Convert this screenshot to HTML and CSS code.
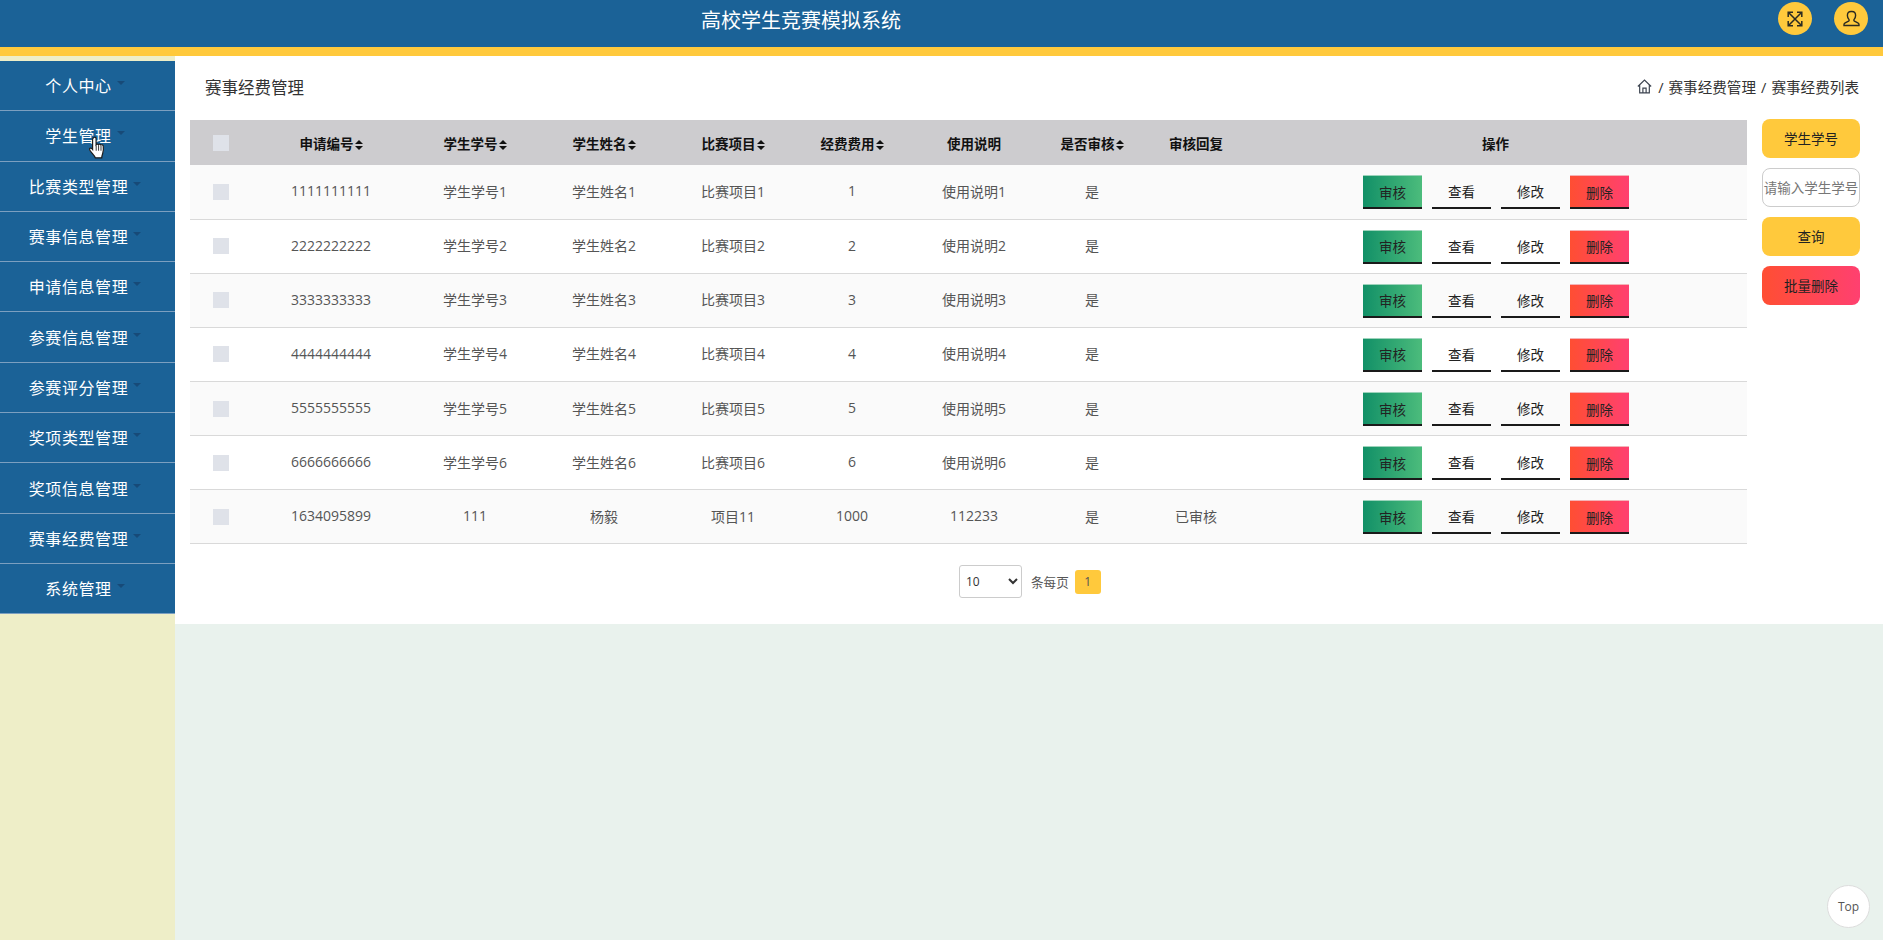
FILE: index.html
```html
<!DOCTYPE html>
<html lang="zh-CN">
<head>
<meta charset="utf-8">
<title>高校学生竞赛模拟系统</title>
<link rel="stylesheet" href="styles.css">
</head>
<body>
<header class="topbar">
  <div class="topbar-title">高校学生竞赛模拟系统</div>
  <div class="topbar-tools">
    <span class="round-btn"><svg viewBox="0 0 20 20" width="20" height="20" fill="none" stroke="#2b2a22" stroke-width="1.5"><path d="M4 4l12 12M16 4L4 16"/><path d="M3.2 8V3.2H8M12 3.2h4.8V8M3.2 12v4.8H8M12 16.8h4.8V12"/></svg></span>
    <span class="round-btn"><svg viewBox="0 0 20 20" width="20" height="20" fill="none" stroke="#2b2a22" stroke-width="1.4"><path d="M10 2.5c-2.3 0-3.6 1.7-3.6 4 0 1.800.8 3.100 1.500 3.900.4.500.3 1.400-.3 1.700l-3.400 1.700c-.8.400-1.200 1-1.200 1.700v1h15v-1c0-.7-.4-1.300-1.200-1.700l-3.400-1.700c-.6-.3-.7-1.200-.3-1.700.7-.8 1.500-2.100 1.500-3.900 0-2.300-1.300-4-3.600-4z"/></svg></span>
  </div>
</header>
<div class="layout">
  <aside class="sidebar">
    <nav class="menu">
      <a class="menu-item">个人中心<i class="caret"></i></a>
      <a class="menu-item">学生管理<i class="caret"></i></a>
      <a class="menu-item">比赛类型管理<i class="caret"></i></a>
      <a class="menu-item">赛事信息管理<i class="caret"></i></a>
      <a class="menu-item">申请信息管理<i class="caret"></i></a>
      <a class="menu-item">参赛信息管理<i class="caret"></i></a>
      <a class="menu-item">参赛评分管理<i class="caret"></i></a>
      <a class="menu-item">奖项类型管理<i class="caret"></i></a>
      <a class="menu-item">奖项信息管理<i class="caret"></i></a>
      <a class="menu-item">赛事经费管理<i class="caret"></i></a>
      <a class="menu-item">系统管理<i class="caret"></i></a>
    </nav>
  </aside>
  <main class="main">
    <section class="panel">
      <div class="crumbs">
        <h1 class="page-title">赛事经费管理</h1>
        <div class="crumb-path">
          <svg class="home" viewBox="0 0 14 14" width="15" height="15" fill="none" stroke="#3d4450" stroke-width="1.1"><path d="M.8 7L7 1l6.200 6M2.500 5.800V13h9V5.800M5.500 13V8.500h3V13"/></svg>
          <span>/</span><span>赛事经费管理</span><span>/</span><span>赛事经费列表</span>
        </div>
      </div>
      <div class="content">
        <table class="grid">
          <colgroup>
            <col class="c-check"><col class="c-no"><col class="c-sid"><col class="c-name"><col class="c-item"><col class="c-fee"><col class="c-desc"><col class="c-ok"><col class="c-reply"><col>
          </colgroup>
          <thead>
            <tr>
              <th><span class="check"></span></th>
              <th>申请编号<svg class="sort" viewBox="0 0 8 10"><path d="M4 0l4 4H0zM4 10L0 6h8z"/></svg></th>
              <th>学生学号<svg class="sort" viewBox="0 0 8 10"><path d="M4 0l4 4H0zM4 10L0 6h8z"/></svg></th>
              <th>学生姓名<svg class="sort" viewBox="0 0 8 10"><path d="M4 0l4 4H0zM4 10L0 6h8z"/></svg></th>
              <th>比赛项目<svg class="sort" viewBox="0 0 8 10"><path d="M4 0l4 4H0zM4 10L0 6h8z"/></svg></th>
              <th>经费费用<svg class="sort" viewBox="0 0 8 10"><path d="M4 0l4 4H0zM4 10L0 6h8z"/></svg></th>
              <th>使用说明</th>
              <th>是否审核<svg class="sort" viewBox="0 0 8 10"><path d="M4 0l4 4H0zM4 10L0 6h8z"/></svg></th>
              <th>审核回复</th>
              <th class="op-head">操作</th>
            </tr>
          </thead>
          <tbody>
            <tr><td class="check-cell"><span class="check"></span></td><td>1111111111</td><td>学生学号1</td><td>学生姓名1</td><td>比赛项目1</td><td>1</td><td>使用说明1</td><td>是</td><td></td><td class="op-cell"><div class="ops"><a class="op op-green">审核</a><a class="op">查看</a><a class="op">修改</a><a class="op op-red">删除</a></div></td></tr>
            <tr><td class="check-cell"><span class="check"></span></td><td>2222222222</td><td>学生学号2</td><td>学生姓名2</td><td>比赛项目2</td><td>2</td><td>使用说明2</td><td>是</td><td></td><td class="op-cell"><div class="ops"><a class="op op-green">审核</a><a class="op">查看</a><a class="op">修改</a><a class="op op-red">删除</a></div></td></tr>
            <tr><td class="check-cell"><span class="check"></span></td><td>3333333333</td><td>学生学号3</td><td>学生姓名3</td><td>比赛项目3</td><td>3</td><td>使用说明3</td><td>是</td><td></td><td class="op-cell"><div class="ops"><a class="op op-green">审核</a><a class="op">查看</a><a class="op">修改</a><a class="op op-red">删除</a></div></td></tr>
            <tr><td class="check-cell"><span class="check"></span></td><td>4444444444</td><td>学生学号4</td><td>学生姓名4</td><td>比赛项目4</td><td>4</td><td>使用说明4</td><td>是</td><td></td><td class="op-cell"><div class="ops"><a class="op op-green">审核</a><a class="op">查看</a><a class="op">修改</a><a class="op op-red">删除</a></div></td></tr>
            <tr><td class="check-cell"><span class="check"></span></td><td>5555555555</td><td>学生学号5</td><td>学生姓名5</td><td>比赛项目5</td><td>5</td><td>使用说明5</td><td>是</td><td></td><td class="op-cell"><div class="ops"><a class="op op-green">审核</a><a class="op">查看</a><a class="op">修改</a><a class="op op-red">删除</a></div></td></tr>
            <tr><td class="check-cell"><span class="check"></span></td><td>6666666666</td><td>学生学号6</td><td>学生姓名6</td><td>比赛项目6</td><td>6</td><td>使用说明6</td><td>是</td><td></td><td class="op-cell"><div class="ops"><a class="op op-green">审核</a><a class="op">查看</a><a class="op">修改</a><a class="op op-red">删除</a></div></td></tr>
            <tr><td class="check-cell"><span class="check"></span></td><td>1634095899</td><td>111</td><td>杨毅</td><td>项目11</td><td>1000</td><td>112233</td><td>是</td><td>已审核</td><td class="op-cell"><div class="ops"><a class="op op-green">审核</a><a class="op">查看</a><a class="op">修改</a><a class="op op-red">删除</a></div></td></tr>
          </tbody>
        </table>
        <div class="side-tools">
          <div class="tool tool-yellow">学生学号</div>
          <input class="tool tool-input" type="text" placeholder="请输入学生学号">
          <div class="tool tool-yellow">查询</div>
          <div class="tool tool-red">批量删除</div>
        </div>
      </div>
      <div class="pager">
        <select class="pager-size"><option>10</option></select>
        <span class="pager-label">条每页</span>
        <span class="pager-page">1</span>
      </div>
    </section>
  </main>
</div>
<svg class="cursor" viewBox="0 0 17 22" width="19" height="24"><path d="M5 1.500c1-.8 2.200-.2 2.200 1V8c.6-.8 1.800-.7 2.200 0 .6-.7 1.800-.6 2.200.3.800-.6 2.100-.2 2.200 1 .3 2.600.2 5-.6 7-.5 1.400-.8 2.500-.8 3.700H6.500c-.6-1.700-2-3-3.400-4.700C2 14 .8 12.800 1.200 11.700c.5-1 1.800-.8 2.800.6V3c0-.6.400-1.200 1-1.500z" fill="#fff" stroke="#1c1c1c" stroke-width="1.100"/><path d="M7.300 8.500v5M9.500 8.500v5M11.700 9v4.500" stroke="#1c1c1c" stroke-width=".8" fill="none"/></svg>
<a class="to-top">Top</a>
</body>
</html>
```
FILE: styles.css
```css
* { box-sizing: border-box; }
html, body { margin: 0; height: 100%; }
body {
  height: 940px;
  overflow: hidden;
  display: flex;
  flex-direction: column;
  font-family: "Open Sans", "Noto Sans CJK SC", sans-serif;
  background: #e9f2ed;
  color: #555;
}
.topbar {
  height: 56px;
  flex: none;
  background: #1b6297;
  border-bottom: 9px solid #ffc93c;
  display: flex;
  align-items: flex-start;
  justify-content: center;
  position: relative;
}
.topbar-title {
  color: #fff;
  font-size: 20px;
  line-height: 41px;
  width: 100%;
  text-align: center;
  padding-right: 281px;
}
.topbar-tools {
  position: absolute;
  top: 2px;
  right: 15px;
  display: flex;
  gap: 22px;
}
.round-btn {
  width: 34px;
  height: 33px;
  border-radius: 50%;
  background: #ffc93c;
  display: flex;
  align-items: center;
  justify-content: center;
}
.layout { flex: 1; display: flex; min-height: 0; }
.sidebar {
  width: 175px;
  flex: none;
  background: #eeeec8;
  padding-top: 5px;
}
.menu-item {
  display: flex;
  align-items: center;
  justify-content: center;
  height: 50.3px;
  background: #1b6297;
  color: #fff;
  font-size: 16px;
  letter-spacing: .6px;
  border-bottom: 1px solid #7c9fc0;
  padding: 0 4px 1px 0;
  position: relative;
}
.caret {
  width: 0;
  height: 0;
  border-left: 4px solid transparent;
  border-right: 4px solid transparent;
  border-top: 4px solid #174a78;
  margin-left: 5px;
  margin-right: 1px;
  position: relative;
  top: -2px;
}
.main { flex: 1; min-width: 0; }
.panel {
  background: #fff;
  height: 568px;
  padding: 0 15px;
}
.crumbs {
  height: 64px;
  display: flex;
  align-items: center;
  justify-content: space-between;
  padding: 0 9px 3px 15px;
}
.page-title {
  margin: 0;
  font-weight: 400;
  font-size: 16.5px;
  color: #333;
}
.crumb-path {
  display: flex;
  align-items: center;
  gap: 5px;
  font-size: 14.6px;
  color: #333;
}
.home { margin-right: 1px; }
.content {
  display: flex;
  align-items: flex-start;
  gap: 15px;
}
.grid {
  width: 1557px;
  flex: none;
  table-layout: fixed;
  border-collapse: collapse;
  font-size: 14px;
}
.c-check { width: 60px; }
.c-no { width: 162px; }
.c-sid { width: 126px; }
.c-name { width: 132px; }
.c-item { width: 126px; }
.c-fee { width: 112px; }
.c-desc { width: 132px; }
.c-ok { width: 104px; }
.c-reply { width: 104px; }
.grid th {
  height: 45px;
  background: #cdcccf;
  color: #111;
  font-weight: 700;
  font-size: 13.5px;
  padding: 0;
}
.grid th.op-head { padding-right: 4px; }
.grid td {
  height: 54.15px;
  padding: 0 0 2px;
  text-align: center;
  border-bottom: 1.5px solid #d9d9d9;
  color: #555;
}
.grid td.check-cell { padding: 0; }
.grid td.op-cell { padding: 1px 3px 0 0; }
.grid tbody tr:nth-child(odd) td { background: #fafafa; }
.grid tbody tr:nth-child(even) td { background: #fff; }
.check {
  display: block;
  width: 16px;
  height: 16px;
  margin-left: 23px;
  background: #dfe2e9;
}
.sort { width: 8px; height: 10px; margin-left: 1px; fill: #111; vertical-align: -1px; }
.ops { display: flex; justify-content: center; gap: 10px; }
.op {
  width: 59px;
  height: 34px;
  display: flex;
  align-items: center;
  justify-content: center;
  border-bottom: 2px solid #1a1a1a;
  font-size: 13.5px;
  color: #222;
}
.op-green { background: linear-gradient(90deg, #129067, #4cbc7c); border-top: 1px solid #9dd3bb; }
.op-red { background: linear-gradient(90deg, #ff4e33, #ff4070); border-top: 1px solid #f3b4b8; }
.side-tools {
  width: 98px;
  flex: none;
  margin-top: -1px;
  display: flex;
  flex-direction: column;
  gap: 10px;
}
.tool {
  width: 98px;
  height: 39px;
  border-radius: 8px;
  display: flex;
  align-items: center;
  justify-content: center;
  font-size: 13.5px;
  color: #222;
  padding-bottom: 2px;
}
.tool-yellow { background: #ffc93c; }
.tool-red { background: linear-gradient(90deg, #ff4e33, #ff4070); }
.tool-input {
  border: 1px solid #ccc;
  background: #fff;
  padding: 0;
  text-align: center;
  font-family: inherit;
  outline: none;
}
.tool-input::placeholder { color: #777; opacity: 1; }
.pager {
  display: flex;
  align-items: center;
  justify-content: flex-start;
  margin-top: 21px;
  padding-left: 769px;
  height: 33px;
}
.pager-size {
  width: 63px;
  height: 33px;
  border: 1px solid #ccc;
  border-radius: 3px;
  background: #fff;
  font-size: 12px;
  color: #333;
  font-family: inherit;
  padding-left: 2px;
}
.pager-label { font-size: 12.6px; color: #555; margin-left: 9px; }
.pager-page {
  width: 26px;
  height: 24px;
  margin-left: 6px;
  border-radius: 3px;
  background: #ffc93c;
  color: #555;
  font-size: 12px;
  display: flex;
  align-items: center;
  justify-content: center;
}
.cursor { position: absolute; left: 88px; top: 136px; }
.to-top {
  position: absolute;
  left: 1827px;
  top: 885px;
  width: 43px;
  height: 43px;
  border-radius: 50%;
  border: 1px solid #ddd;
  background: #fff;
  color: #555;
  font-size: 12px;
  font-family: "Open Sans", sans-serif;
  display: flex;
  align-items: center;
  justify-content: center;
}
```
